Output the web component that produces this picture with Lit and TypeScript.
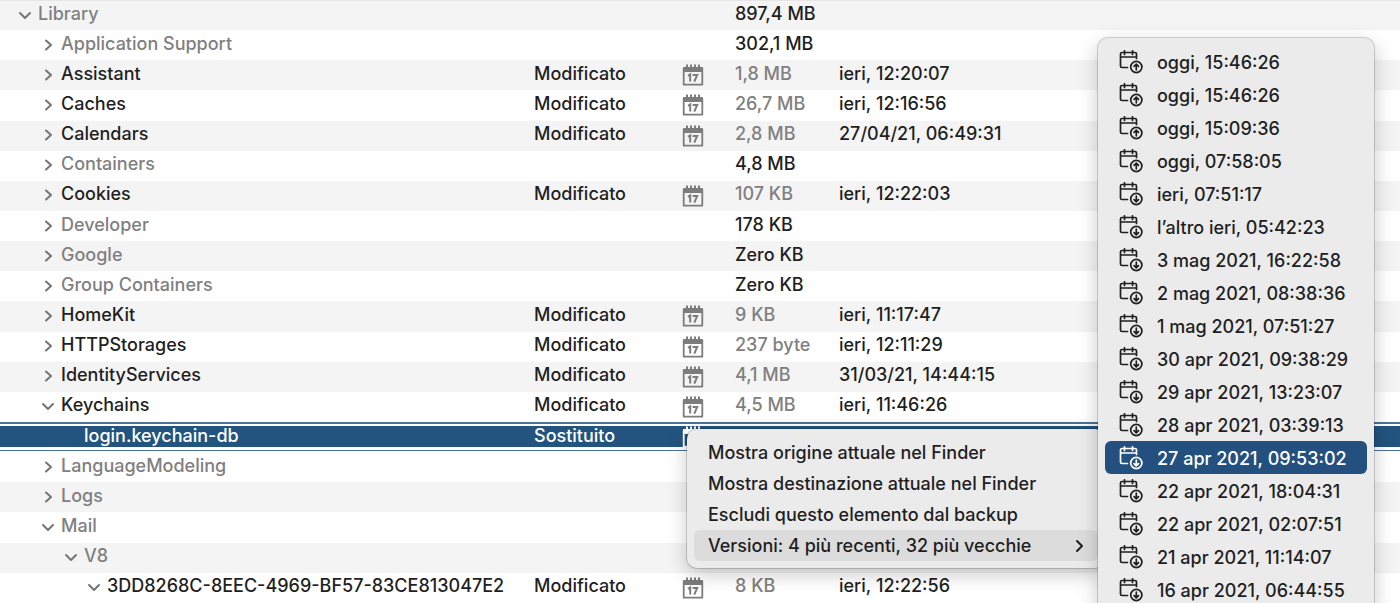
import { LitElement, html, css, svg, nothing } from "lit";
import { customElement, property } from "lit/decorators.js";

interface Entry {
  name: string;
  level: number;
  fold?: "open" | "closed";
  dim?: boolean;
  status?: string;
  size?: string;
  date?: string;
  selected?: boolean;
}

const M = "Modificato";

const ENTRIES: Entry[] = [
  { name: "Library", level: 0, fold: "open", dim: true, size: "897,4 MB" },
  { name: "Application Support", level: 1, fold: "closed", dim: true, size: "302,1 MB" },
  { name: "Assistant", level: 1, fold: "closed", status: M, size: "1,8 MB", date: "ieri, 12:20:07" },
  { name: "Caches", level: 1, fold: "closed", status: M, size: "26,7 MB", date: "ieri, 12:16:56" },
  { name: "Calendars", level: 1, fold: "closed", status: M, size: "2,8 MB", date: "27/04/21, 06:49:31" },
  { name: "Containers", level: 1, fold: "closed", dim: true, size: "4,8 MB" },
  { name: "Cookies", level: 1, fold: "closed", status: M, size: "107 KB", date: "ieri, 12:22:03" },
  { name: "Developer", level: 1, fold: "closed", dim: true, size: "178 KB" },
  { name: "Google", level: 1, fold: "closed", dim: true, size: "Zero KB" },
  { name: "Group Containers", level: 1, fold: "closed", dim: true, size: "Zero KB" },
  { name: "HomeKit", level: 1, fold: "closed", status: M, size: "9 KB", date: "ieri, 11:17:47" },
  { name: "HTTPStorages", level: 1, fold: "closed", status: M, size: "237 byte", date: "ieri, 12:11:29" },
  { name: "IdentityServices", level: 1, fold: "closed", status: M, size: "4,1 MB", date: "31/03/21, 14:44:15" },
  { name: "Keychains", level: 1, fold: "open", status: M, size: "4,5 MB", date: "ieri, 11:46:26" },
  { name: "login.keychain-db", level: 2, status: "Sostituito", selected: true },
  { name: "LanguageModeling", level: 1, fold: "closed", dim: true },
  { name: "Logs", level: 1, fold: "closed", dim: true },
  { name: "Mail", level: 1, fold: "open", dim: true },
  { name: "V8", level: 2, fold: "open", dim: true },
  { name: "3DD8268C-8EEC-4969-BF57-83CE813047E2", level: 3, fold: "open", status: M, size: "8 KB", date: "ieri, 12:22:56" },
];

const ACTIONS = [
  "Mostra origine attuale nel Finder",
  "Mostra destinazione attuale nel Finder",
  "Escludi questo elemento dal backup",
];

const VERSIONS = [
  "oggi, 15:46:26",
  "oggi, 15:46:26",
  "oggi, 15:09:36",
  "oggi, 07:58:05",
  "ieri, 07:51:17",
  "l’altro ieri, 05:42:23",
  "3 mag 2021, 16:22:58",
  "2 mag 2021, 08:38:36",
  "1 mag 2021, 07:51:27",
  "30 apr 2021, 09:38:29",
  "29 apr 2021, 13:23:07",
  "28 apr 2021, 03:39:13",
  "27 apr 2021, 09:53:02",
  "22 apr 2021, 18:04:31",
  "22 apr 2021, 02:07:51",
  "21 apr 2021, 11:14:07",
  "16 apr 2021, 06:44:55",
];
const NEWER = 4;
const CHOSEN = 12;

const chevron = (dir: "open" | "closed") => html`<svg class="chevron" viewBox="0 0 14 14" aria-hidden="true">
  <path d=${dir === "open" ? "M2 5 L7 10 L12 5" : "M5 2.500 L10 7 L5 11.500"} />
</svg>`;

const calendar = html`<svg class="calendar" viewBox="0 0 22 22" aria-hidden="true">
  <path
    fill="currentColor"
    fill-rule="evenodd"
    d="M2 3H4V1.2a1 1 0 0 1 2 0V3H8V1.2a1 1 0 0 1 2 0V3H12V1.2a1 1 0 0 1 2 0V3H16V1.2a1 1 0 0 1 2 0V3H20a1.2 1.2 0 0 1 1.2 1.2V20.400a1.200 1.200 0 0 1-1.200 1.200H2A1.200 1.200 0 0 1 .8 20.400V4.200A1.200 1.200 0 0 1 2 3ZM2.600 8V19.800H19.400V8Z"
  />
  <path fill="none" stroke="currentColor" stroke-width="2" d="M6 11.800 8.200 10.400V17.600M10.600 10.900H15.200L12.300 17.600" />
</svg>`;

const versionIcon = (up: boolean) => html`<svg class="version" viewBox="0 0 24 24" aria-hidden="true">
  <path d="M8.500 17.500H3Q1.500 17.500 1.500 16V4Q1.500 2.500 3 2.500H16Q17.500 2.500 17.500 4V8.500M1.500 7H17.500M5.500 .8V4.500M13.500 .8V4.500" />
  <circle cx="17.300" cy="17" r="5.600" />
  ${up
    ? svg`<path d="M17.300 19.800V14.300M15.100 16.300 17.300 14.100 19.500 16.300" />`
    : svg`<path d="M17.300 14.200V19.700M15.100 17.700 17.300 19.900 19.500 17.700" />`}
</svg>`;

@customElement("backup-tree")
class BackupTree extends LitElement {
  @property({ attribute: false }) entries: Entry[] = [];

  static styles = css`
    :host {
      display: block;
    }
    .tree {
      width: 100%;
      height: 100vh;
      border-collapse: collapse;
      table-layout: fixed;
    }
    .name-col { width: 534px; }
    .status-col { width: 148px; }
    .icon-col { width: 53px; }
    .size-col { width: 104px; }
    .row:nth-child(odd) {
      background: #f4f4f4;
    }
    .row:first-child {
      background: linear-gradient(#e6e6e6 0 1px, #f4f4f4 1px);
    }
    .cell {
      height: 30px;
      padding: 0 0 3px;
      line-height: 24px;
      text-align: left;
      vertical-align: middle;
      font-weight: inherit;
      white-space: nowrap;
      box-sizing: border-box;
    }
    .icon-cell {
      padding: 0;
    }
    .name {
      display: flex;
      align-items: center;
      padding-left: calc(15px + var(--level) * 23px);
    }
    .toggle {
      display: flex;
      width: 23px;
      padding: 2px 0 0 3px;
      box-sizing: border-box;
      border: 0;
      background: none;
      color: #757575;
    }
    .spacer {
      width: 23px;
    }
    .chevron {
      width: 14px;
      height: 14px;
      fill: none;
      stroke: currentColor;
      stroke-width: 2;
      stroke-linecap: round;
      stroke-linejoin: round;
    }
    .dim,
    .size {
      color: #808080;
    }
    .total {
      color: #1f1f1f;
    }
    .calendar {
      display: block;
      width: 22px;
      height: 22px;
      color: #7c7c7c;
    }
    .row.selected {
      color: #fff;
      background: linear-gradient(#4b7396 0 2px, #fff 2px 4px, #23547f 4px 25px, #fff 25px 28px, #4b7396 28px 29px, #fff 29px);
    }
    .selected .calendar {
      color: #fff;
    }
  `;

  render() {
    return html`<table class="tree" aria-label="Elementi del backup">
      <colgroup>
        <col class="name-col" />
        <col class="status-col" />
        <col class="icon-col" />
        <col class="size-col" />
        <col />
      </colgroup>
      <tbody>
        ${this.entries.map(
          (e) => html`<tr class="row ${e.selected ? "selected" : ""}">
            <th class="cell" scope="row">
              <div class="name ${e.dim ? "dim" : ""}" style="--level:${e.level}">
                ${e.fold
                  ? html`<button class="toggle" aria-label=${e.name} aria-expanded=${e.fold === "open"}>${chevron(e.fold)}</button>`
                  : html`<span class="spacer"></span>`}
                <span>${e.name}</span>
              </div>
            </th>
            <td class="cell">${e.status ?? nothing}</td>
            <td class="cell icon-cell">${e.status ? calendar : nothing}</td>
            <td class="cell size ${e.status ? "" : "total"}">${e.size ?? nothing}</td>
            <td class="cell">${e.date ?? nothing}</td>
          </tr>`
        )}
      </tbody>
    </table>`;
  }
}

@customElement("app-root")
class AppRoot extends LitElement {
  static styles = css`
    :host {
      display: block;
      position: relative;
      min-height: 100vh;
      overflow: hidden;
      background: #fff;
      color: #1f1f1f;
      font: 500 18px/24px Inter, "Liberation Sans", sans-serif;
    }
    .menu {
      position: absolute;
      box-sizing: border-box;
      border-radius: 10px;
      background: #ebebeb;
      box-shadow: 0 0 0 1px rgba(0, 0, 0, 0.16), 0 6px 20px rgba(0, 0, 0, 0.22);
    }
    .context {
      left: 687px;
      top: 429px;
      width: 418px;
      min-height: 139px;
      padding: 7px;
      display: grid;
      grid-auto-rows: 1fr;
    }
    .versions {
      left: 1098px;
      top: 38px;
      width: 276px;
      padding: 7px;
      display: grid;
      grid-auto-rows: 33px;
    }
    .item {
      display: flex;
      align-items: center;
      border: 0;
      border-radius: 6px;
      padding: 2px 14px 0;
      background: none;
      color: inherit;
      font: inherit;
      text-align: left;
      white-space: nowrap;
    }
    .item.open {
      justify-content: space-between;
      padding-right: 11px;
      background: #dcdcdc;
    }
    .item.chosen {
      color: #fff;
      background: #23507e;
    }
    .arrow {
      width: 14px;
      height: 14px;
      fill: none;
      stroke: currentColor;
      stroke-width: 2;
      stroke-linecap: round;
      stroke-linejoin: round;
    }
    .version {
      width: 24px;
      height: 24px;
      margin: 0 14px 2px 0;
      fill: none;
      stroke: currentColor;
      stroke-width: 1.700;
      stroke-linecap: round;
      stroke-linejoin: round;
    }
  `;

  render() {
    return html`
      <backup-tree .entries=${ENTRIES}></backup-tree>
      <div class="menu context" role="menu">
        ${ACTIONS.map((a) => html`<button class="item" role="menuitem">${a}</button>`)}
        <button class="item open" role="menuitem" aria-haspopup="menu" aria-expanded="true">
          <span>Versioni: 4 più recenti, 32 più vecchie</span>
          <svg class="arrow" viewBox="0 0 14 14" aria-hidden="true"><path d="M4 2 L9 7 L4 12" /></svg>
        </button>
      </div>
      <div class="menu versions" role="menu">
        ${VERSIONS.map(
          (v, i) => html`<button class="item ${i === CHOSEN ? "chosen" : ""}" role="menuitem">
            ${versionIcon(i < NEWER)}<span>${v}</span>
          </button>`
        )}
      </div>
    `;
  }
}
